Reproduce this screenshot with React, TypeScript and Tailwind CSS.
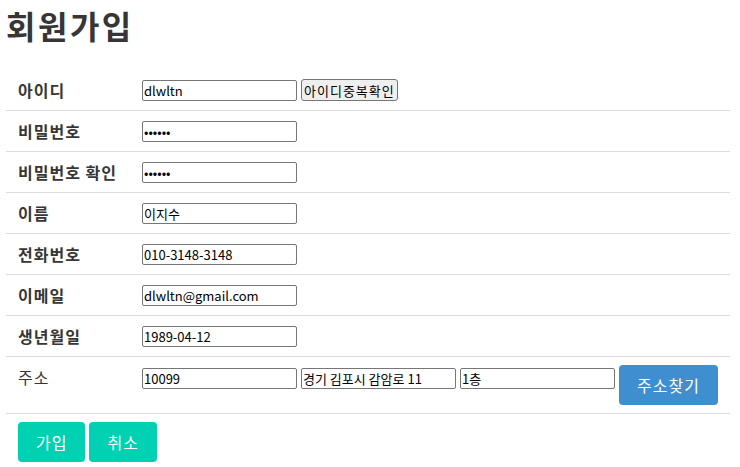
import React from 'react';

const inputCls =
  'w-[155px] h-[21px] border border-[#767676] rounded-[2px] px-[1px] text-[13px] text-black bg-white outline-none';

const rows = [
  { label: '아이디', value: 'dlwltn', type: 'text', check: true },
  { label: '비밀번호', value: '123456', type: 'password' },
  { label: '비밀번호 확인', value: '123456', type: 'password' },
  { label: '이름', value: '이지수', type: 'text' },
  { label: '전화번호', value: '010-3148-3148', type: 'text' },
  { label: '이메일', value: 'dlwltn@gmail.com', type: 'text' },
  { label: '생년월일', value: '1989-04-12', type: 'text' },
];

export default function App() {
  return (
    <div className="w-[740px] h-[467px] bg-white px-[6px] font-['Noto_Sans_CJK_KR','Noto_Sans',sans-serif] text-[#4a4a4a]">
      <h1 className="text-[32px] leading-[48px] font-bold tracking-[2.5px] text-[#363636] mb-[21px] pt-[1px]">
        회원가입
      </h1>

      <table className="w-[724px] border-collapse text-[16px]">
        <tbody>
          {rows.map((r) => (
            <tr key={r.label} className="border-b border-[#dbdbdb]">
              <th className="w-[124px] px-3 py-2 text-left align-top font-semibold tracking-[1px] leading-6 text-[#363636]">
                {r.label}
              </th>
              <td className="px-3 py-2 align-top">
                <div className="flex items-center h-6 gap-[4px]">
                  <input
                    type={r.type}
                    defaultValue={r.value}
                    className={inputCls}
                  />
                  {r.check && (
                    <button className="h-[22px] px-[2px] bg-[#efefef] border border-[#767676] rounded-[3px] text-[13px] tracking-[1px] text-black leading-none">
                      아이디중복확인
                    </button>
                  )}
                </div>
              </td>
            </tr>
          ))}

          <tr className="border-b border-[#dbdbdb]">
            <td className="px-3 py-2 align-top leading-6 tracking-[1px] text-[#363636]">주소</td>
            <td className="px-3 py-2 align-top">
              <div className="flex items-start gap-[4px]">
                <input type="text" defaultValue="10099" className={`${inputCls} mt-[3px]`} />
                <input
                  type="text"
                  defaultValue="경기 김포시 감암로 11"
                  className={`${inputCls} mt-[3px]`}
                />
                <input type="text" defaultValue="1층" className={`${inputCls} mt-[3px]`} />
                <button className="h-[40px] px-[18px] rounded-[4px] bg-[#3e8ed0] text-white text-[16px] tracking-[1px]">
                  주소찾기
                </button>
              </div>
            </td>
          </tr>

          <tr>
            <td colSpan={2} className="px-3 py-2 align-top">
              <div className="flex gap-[4px]">
                <button className="h-[40px] px-[18px] rounded-[4px] bg-[#00d1b2] text-white text-[16px] tracking-[1px]">
                  가입
                </button>
                <button className="h-[40px] px-[18px] rounded-[4px] bg-[#00d1b2] text-white text-[16px] tracking-[1px]">
                  취소
                </button>
              </div>
            </td>
          </tr>
        </tbody>
      </table>
    </div>
  );
}
